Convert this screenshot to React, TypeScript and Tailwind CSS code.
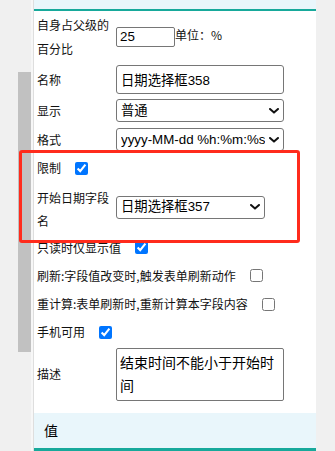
import React from "react";

const labelFont = { fontFamily: '"Noto Sans CJK SC", "Liberation Sans", sans-serif' };
const ctrlFont = { fontFamily: '"Liberation Sans", "Noto Sans CJK SC", sans-serif' };

function Chevron() {
  return (
    <svg width="10" height="6" viewBox="0 0 10 6" className="shrink-0">
      <path d="M1 1 L5 4.6 L9 1" fill="none" stroke="#111" strokeWidth="2" strokeLinecap="round" strokeLinejoin="round" />
    </svg>
  );
}

function Select({ value, width }: { value: string; width: string }) {
  return (
    <div
      className={`flex items-center justify-between h-[23px] border border-[#767676] rounded-[3px] pl-[4px] pr-[4px] text-[13.33px] text-black ${width}`}
      style={ctrlFont}
    >
      <span className="whitespace-nowrap overflow-hidden">{value}</span>
      <Chevron />
    </div>
  );
}

function Check({ checked }: { checked: boolean }) {
  return (
    <input
      type="checkbox"
      defaultChecked={checked}
      className="m-0 ml-[14px] w-[13px] h-[13px] shrink-0"
    />
  );
}

export default function App() {
  return (
    <div className="relative flex w-[335px] h-[451px] overflow-hidden bg-[#f0f0f0]">
      {/* left scrollbar area */}
      <div className="w-[31px] shrink-0 bg-[#f0f0f0]">
        <div className="mt-[72px] ml-[18px] w-[13px] h-[280px] bg-[#c1c1c1]" />
      </div>
      <div className="w-[2px] shrink-0 bg-[#f7f7f7]" />
      {/* panel */}
      <div className="w-[283px] shrink-0 bg-white border-l border-[#dedede] flex flex-col text-[12px] text-[#111]" style={labelFont}>
        <div className="h-[9px] bg-[#e9f6fb]" />
        <div className="h-[2px] bg-[#17a99b]" />

        {/* row 1 */}
        <div className="flex items-center h-[51px]">
          <div className="w-[82px] pl-[3px] leading-[24px]">自身占父级的百分比</div>
          <input
            defaultValue="25"
            className="w-[59px] h-[20px] border border-[#767676] rounded-[2px] px-[3px] text-[13.33px] text-black"
            style={ctrlFont}
          />
          <span className="leading-[16px] -mt-[4px]">单位：%</span>
        </div>

        {/* name */}
        <div className="flex items-center h-[35px]">
          <div className="w-[82px] pl-[3px]">名称</div>
          <input
            defaultValue="日期选择框358"
            className="w-[168px] h-[29px] border border-[#767676] rounded-[3px] px-[4px] text-[13.33px] text-black"
            style={ctrlFont}
          />
        </div>

        {/* display */}
        <div className="flex items-center h-[27px]">
          <div className="w-[82px] pl-[3px]">显示</div>
          <Select value="普通" width="w-[168px]" />
        </div>

        {/* format */}
        <div className="flex items-center h-[31px]">
          <div className="w-[82px] pl-[3px]">格式</div>
          <Select value="yyyy-MM-dd %h:%m:%s" width="w-[168px]" />
        </div>

        {/* limit */}
        <div className="flex items-center h-[26px] pl-[3px]">
          <span>限制</span>
          <Check checked />
        </div>

        {/* start date field */}
        <div className="flex items-center h-[52px]">
          <div className="w-[82px] pl-[3px] leading-[23px] mt-[3px]">开始日期字段名</div>
          <Select value="日期选择框357" width="w-[149px]" />
        </div>

        <div className="flex items-center h-[29px] pl-[3px]">
          <span>只读时仅显示值</span>
          <Check checked />
        </div>
        <div className="flex items-center h-[27px] pl-[3px]">
          <span>刷新:字段值改变时,触发表单刷新动作</span>
          <Check checked={false} />
        </div>
        <div className="flex items-center h-[30px] pl-[3px]">
          <span>重计算:表单刷新时,重新计算本字段内容</span>
          <Check checked={false} />
        </div>
        <div className="flex items-center h-[26px] pl-[3px]">
          <span>手机可用</span>
          <Check checked />
        </div>

        {/* description */}
        <div className="flex items-center h-[58px]">
          <div className="w-[82px] pl-[3px]">描述</div>
          <textarea
            defaultValue="结束时间不能小于开始时间"
            className="w-[168px] h-[53px] border border-[#767676] rounded-[2px] pl-[3px] pr-[2px] pt-[2px] text-[14px] leading-[23px] text-black resize-none overflow-hidden"
            style={labelFont}
          />
        </div>

        <div className="h-[10px]" />

        <div className="h-[35px] bg-[#e9f6fb] flex items-center pl-[10px] text-[14px] text-black">值</div>
        <div className="h-[3px] bg-[#17a99b]" />
      </div>
      <div className="flex-1 bg-[#f0f0f0]" />

      {/* annotation box */}
      <div className="absolute left-[19px] top-[150px] w-[281px] h-[93px] border-[3px] border-[#ff2b1c] rounded-[3px] pointer-events-none" />
    </div>
  );
}
